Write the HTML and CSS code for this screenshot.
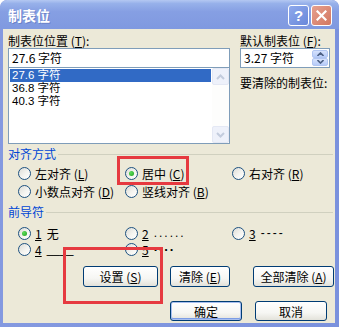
FILE: index.html
```html
<!DOCTYPE html>
<html>
<head>
<meta charset="utf-8">
<link rel="stylesheet" href="styles.css">
</head>
<body>
<div class="window">
  <div class="titlebar">
    <span class="title">制表位</span>
    <div class="tb-btns">
      <span class="tb-btn help">?</span>
      <span class="tb-btn close">
        <svg width="11" height="11" viewBox="0 0 11 11"><path d="M1.5 1.5 L9.5 9.5 M9.5 1.5 L1.5 9.5" stroke="#fff" stroke-width="2.2" stroke-linecap="square"/></svg>
      </span>
    </div>
  </div>
  <div class="client">
    <div class="top">
      <div class="col-left">
        <div class="label">制表位位置 (<u>T</u>):</div>
        <div class="textbox">27.6 字符</div>
        <div class="listbox">
          <div class="items">
            <div class="item sel">27.6 字符</div>
            <div class="item">36.8 字符</div>
            <div class="item">40.3 字符</div>
          </div>
          <div class="scrollbar">
            <span class="sb-btn"><svg width="9" height="6" viewBox="0 0 9 6"><path d="M1 5 L4.5 1.5 L8 5" fill="none" stroke="#C3CCDD" stroke-width="2"/></svg></span>
            <span class="sb-track"></span>
            <span class="sb-btn"><svg width="9" height="6" viewBox="0 0 9 6"><path d="M1 1 L4.5 4.5 L8 1" fill="none" stroke="#C3CCDD" stroke-width="2"/></svg></span>
          </div>
        </div>
      </div>
      <div class="col-right">
        <div class="label">默认制表位 (<u>F</u>):</div>
        <div class="spinner">
          <span class="sp-val">3.27 字符</span>
          <span class="sp-btns">
            <span class="sp-btn"><svg width="7" height="4" viewBox="0 0 7 4"><path d="M0.5 4 L3.5 1 L6.5 4" fill="none" stroke="#4D6185" stroke-width="1.6"/></svg></span>
            <span class="sp-btn"><svg width="7" height="4" viewBox="0 0 7 4"><path d="M0.5 0 L3.5 3 L6.5 0" fill="none" stroke="#4D6185" stroke-width="1.6"/></svg></span>
          </span>
        </div>
        <div class="label clear-label">要清除的制表位:</div>
      </div>
    </div>

    <div class="group-head"><span class="gh-text">对齐方式</span><span class="gh-line"></span></div>
    <div class="radio-grid align-grid">
      <div class="radio"><span class="circle"></span><span>左对齐 (<u>L</u>)</span></div>
      <div class="radio"><span class="circle on"></span><span>居中 (<u>C</u>)</span></div>
      <div class="radio"><span class="circle"></span><span>右对齐 (<u>R</u>)</span></div>
      <div class="radio"><span class="circle"></span><span>小数点对齐 (<u>D</u>)</span></div>
      <div class="radio"><span class="circle"></span><span>竖线对齐 (<u>B</u>)</span></div>
    </div>

    <div class="group-head lead-head"><span class="gh-text">前导符</span><span class="gh-line"></span></div>
    <div class="radio-grid lead-grid">
      <div class="radio"><span class="circle on"></span><span class="lead"><u>1</u><span class="fill">无</span></span></div>
      <div class="radio"><span class="circle"></span><span class="lead"><u>2</u><span class="fill dots">......</span></span></div>
      <div class="radio"><span class="circle"></span><span class="lead"><u>3</u><span class="fill dashes">----</span></span></div>
      <div class="radio"><span class="circle"></span><span class="lead"><u>4</u><span class="fill unders">____</span></span></div>
      <div class="radio"><span class="circle"></span><span class="lead"><u>5</u><span class="fill bdots">····</span></span></div>
    </div>

    <div class="btn-row row1">
      <span class="btn b-set">设置 (<u>S</u>)</span>
      <span class="btn b-clear">清除 (<u>E</u>)</span>
      <span class="btn b-clearall">全部清除 (<u>A</u>)</span>
    </div>
    <div class="btn-row row2">
      <span class="btn b-ok default">确定</span>
      <span class="btn b-cancel">取消</span>
    </div>
  </div>
  <div class="mark mark1"></div>
  <div class="mark mark2"></div>
</div>
</body>
</html>
```

FILE: styles.css
```css
* { box-sizing: border-box; }
html, body { margin: 0; padding: 0; background: #fff; }
body {
  font-family: "Noto Sans CJK SC", "Noto Sans", sans-serif;
  font-size: 12px;
  color: #000;
}
u { text-decoration: underline; text-underline-offset: 1px; }

.window {
  position: relative;
  width: 339px;
  height: 327px;
  background: linear-gradient(to right, #8499E0, #7A91DD);
  border-radius: 7px 7px 0 0;
  display: flex;
  flex-direction: column;
  overflow: hidden;
}

.titlebar {
  height: 29px;
  flex: none;
  display: flex;
  align-items: center;
  justify-content: space-between;
  padding: 0 7px 0 8px;
  background: linear-gradient(to bottom, #B4C8F2 0%, #97B1EA 12%, #869FE3 40%, #7F99E0 100%);
  border-radius: 7px 7px 0 0;
}
.title {
  color: #fff;
  font-weight: bold;
  font-size: 14px;
  line-height: 16px;
  text-shadow: 1px 1px 0 #6C83C9;
  margin-top: 1px;
}
.tb-btns { display: flex; gap: 2px; margin-top: 1px; }
.tb-btn {
  width: 21px;
  height: 21px;
  border: 1px solid #fff;
  border-radius: 3px;
  display: flex;
  align-items: center;
  justify-content: center;
  color: #fff;
}
.help {
  background: linear-gradient(135deg, #8EA9EC, #6A88DA);
  font-family: "Liberation Sans", sans-serif;
  font-weight: bold;
  font-size: 15px;
  line-height: 1;
}
.close { background: linear-gradient(135deg, #E6A08F, #D37760); }

.client {
  flex: 1;
  margin: 0 4px 4px 3px;
  background: #ECE9D8;
  display: flex;
  flex-direction: column;
  padding: 5px 0 0 5px;
}

.label { height: 14px; line-height: 14px; white-space: nowrap; }

.top { display: flex; gap: 10px; }
.col-left { width: 222px; display: flex; flex-direction: column; }
.col-right { width: 90px; display: flex; flex-direction: column; }

.textbox {
  height: 20px;
  border: 1px solid #7F9DB9;
  background: #fff;
  line-height: 17px;
  padding-left: 3px;
}
.listbox {
  margin-top: -1px;
  height: 77px;
  border: 1px solid #7F9DB9;
  background: #fff;
  display: flex;
}
.items { flex: 1; padding: 1px 1px 0 1px; }
.item {
  height: 13px;
  line-height: 13px;
  padding-left: 2px;
  font-family: "Liberation Sans", "Noto Sans CJK SC", sans-serif;
  font-size: 11.5px;
  overflow: hidden;
}
.item.sel { background: #316AC5; color: #fff; }
.scrollbar {
  width: 17px;
  display: flex;
  flex-direction: column;
  background: #FDFDFC;
}
.sb-btn {
  height: 17px;
  background: #EEF1FA;
  border: 1px solid #E4E8F4;
  border-radius: 2px;
  display: flex;
  align-items: center;
  justify-content: center;
}
.sb-track { flex: 1; }

.spinner {
  height: 20px;
  border: 1px solid #7F9DB9;
  background: #fff;
  display: flex;
  align-items: stretch;
}
.sp-val { flex: 1; line-height: 17px; padding-left: 3px; }
.sp-btns { width: 17px; display: flex; flex-direction: column; padding: 1px 1px 1px 0; }
.sp-btn {
  flex: 1;
  background: linear-gradient(to bottom, #D6E2FC, #B6CBF8);
  border: 1px solid #B1C6F2;
  border-radius: 2px;
  display: flex;
  align-items: center;
  justify-content: center;
}
.clear-label { margin-top: 8px; }

.group-head {
  display: flex;
  align-items: center;
  height: 14px;
  margin-top: 3px;
  padding-right: 2px;
}
.gh-text { color: #0046D5; line-height: 14px; padding-right: 2px; }
.gh-line { flex: 1; height: 1px; background: #D0D0BF; }
.lead-head { margin-top: 5px; }

.radio-grid {
  display: grid;
  grid-template-columns: 107px 107px 1fr;
  padding-left: 10px;
}
.align-grid { grid-auto-rows: 18px; margin-top: 3px; }
.lead-grid { grid-auto-rows: 16px; margin-top: 6px; }
.radio { display: flex; align-items: center; gap: 4px; white-space: nowrap; }
.circle {
  width: 13px;
  height: 13px;
  border-radius: 50%;
  border: 1px solid #1C5180;
  background: linear-gradient(135deg, #DCDCD7 0%, #F4F4F0 55%, #FFFFFF 100%);
  display: flex;
  align-items: center;
  justify-content: center;
  flex: none;
}
.circle.on::after {
  content: "";
  width: 5px;
  height: 5px;
  border-radius: 50%;
  background: radial-gradient(circle at 35% 35%, #5CDC5A, #21A121);
}
.lead { display: flex; align-items: center; }
.fill { margin-left: 5px; }
.dots { letter-spacing: 2px; font-family: "Liberation Sans", sans-serif; }
.dashes { letter-spacing: 2px; font-family: "Liberation Sans", sans-serif; }
.unders { font-family: "Liberation Sans", sans-serif; }
.bdots { font-weight: bold; letter-spacing: 1px; font-family: "Liberation Sans", sans-serif; font-size: 13px; }

.btn-row { display: flex; }
.row1 { margin-top: 9px; padding-left: 75px; }
.row2 { margin-top: 14px; justify-content: flex-end; padding-right: 8px; gap: 13px; }
.btn {
  height: 21px;
  border: 1px solid #003C74;
  border-radius: 3px;
  background: linear-gradient(to bottom, #FFFFFF 0%, #F6F6F3 60%, #E3E2DA 100%);
  display: flex;
  align-items: center;
  justify-content: center;
  white-space: nowrap;
}
.b-set { width: 75px; }
.b-clear { width: 60px; margin-left: 12px; }
.b-clearall { width: 81px; margin-left: 23px; }
.b-ok, .b-cancel { width: 72px; height: 20px; }
.btn.default { box-shadow: inset 0 0 0 1px #A8BFEF, inset 0 -1px 0 1px #7D9DE5; }

.mark {
  position: absolute;
  border: 3px solid #E63A40;
}
.mark1 { left: 117px; top: 156px; width: 72px; height: 29px; }
.mark2 { left: 63px; top: 247px; width: 100px; height: 57px; }
```
